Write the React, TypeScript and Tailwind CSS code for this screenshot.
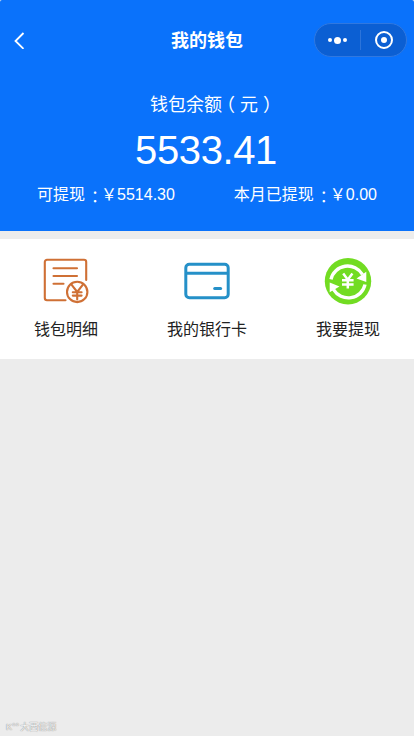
import type { ReactNode } from 'react';

interface MenuItem {
  label: string;
  icon: ReactNode;
}

// ============================================================
// ICONS
// ============================================================
function DetailIcon() {
  return (
    <svg width="48" height="48" viewBox="0 0 48 48" fill="none" stroke="#cf7035" strokeWidth="2.1" strokeLinecap="round">
      <path d="M23.500 43.300H5a2.200 2.200 0 0 1-2.200-2.200V5a2.200 2.200 0 0 1 2.200-2.200h37a2.200 2.200 0 0 1 2.200 2.200v18" />
      <path d="M11.500 11.300h23.500M11.500 19h23.500M11.500 26.700h10" />
      <circle cx="35.200" cy="34.900" r="10.200" />
      <path d="M29.300 27.300l5.900 7.700 5.900-7.700M30.800 35.300h8.800M30.800 38.600h8.800M35.200 35v7.500" />
    </svg>
  );
}

function CardIcon() {
  return (
    <svg width="48" height="48" viewBox="0 0 48 48" fill="none" stroke="#2590c8" strokeWidth="3">
      <rect x="2.800" y="7.300" width="42.400" height="33.500" rx="3.500" />
      <path d="M2.800 16.300h42.400" />
      <path d="M31.700 31.400h5.900" strokeLinecap="round" />
    </svg>
  );
}

function WithdrawIcon() {
  return (
    <svg width="48" height="48" viewBox="0 0 48 48" fill="none">
      <circle cx="24" cy="24.200" r="23.200" fill="#72dc22" />
      <path d="M7 22.300A17 16.500 0 0 1 38.500 17.500M41 27.500A17 16.500 0 0 1 9.500 32.500" stroke="#fff" strokeWidth="3.400" />
      <path d="M42.300 14.700v10.200L32.500 21.600zM5.700 35.300V25.600l9.800 3.800z" fill="#fff" />
      <path d="M19.200 16.500l4.600 6.200 4.600-6.200M18 23.200h11.600M18 27.400h11.600M23.800 22.500v9" stroke="#fff" strokeWidth="2.500" />
    </svg>
  );
}

const MENU: MenuItem[] = [
  { label: '钱包明细', icon: <DetailIcon /> },
  { label: '我的银行卡', icon: <CardIcon /> },
  { label: '我要提现', icon: <WithdrawIcon /> },
];

// ============================================================
// NAV BAR
// ============================================================
function NavBar() {
  return (
    <div className="grid h-20 grid-cols-[1fr_auto_1fr] items-center pr-[7px] pl-[13px]">
      <button aria-label="返回" className="w-4">
        <svg width="14" height="18" viewBox="0 0 14 18" fill="none" stroke="#fff" strokeWidth="1.8">
          <path d="M10.500 2L2.500 10l8 7.800" />
        </svg>
      </button>
      <h1 className="mr-[6px] pt-[2px] text-lg font-bold">我的钱包</h1>
      <div className="flex h-[34px] w-[93px] items-center justify-self-end rounded-full border border-[#3078e0] bg-[#0b5fd3]">
        <button aria-label="更多" className="flex flex-1 items-center justify-center gap-[2px]">
          <span className="size-[4px] rounded-full bg-white" />
          <span className="size-[7px] rounded-full bg-white" />
          <span className="size-[4px] rounded-full bg-white" />
        </button>
        <span className="h-5 w-px bg-[#2c74da]" />
        <button aria-label="关闭" className="flex flex-1 justify-center">
          <span className="flex size-[18px] items-center justify-center rounded-full border-[2.500px] border-white">
            <span className="size-[6px] rounded-full bg-white" />
          </span>
        </button>
      </div>
    </div>
  );
}

// ============================================================
// BALANCE
// ============================================================
// half-width colon, padded back so it sits centred in its cell
function Colon() {
  return <span className="mr-[2px] ml-[6px] inline-block translate-y-[2px] [font-feature-settings:'halt']">：</span>;
}

function Balance() {
  return (
    <div className="flex flex-col items-center">
      <p className="mt-[11px] ml-3 text-lg leading-7">
        钱包余额
        <span className="mr-[5px] ml-1 [font-feature-settings:'halt']">（</span>
        元
        <span className="mr-1 ml-[5px] [font-feature-settings:'halt']">）</span>
      </p>
      <p className="mt-[7px] mr-[2px] text-[40px] leading-[48px] tracking-[-0.4px]">5533.41</p>
      <div className="mt-[9px] flex w-full justify-between px-[37px] text-base leading-6">
        <span>可提现<Colon />￥5514.30</span>
        <span>本月已提现<Colon />￥0.00</span>
      </div>
    </div>
  );
}

export default function App() {
  return (
    <div className="flex h-[736px] w-[414px] flex-col bg-[#ececec] font-['Liberation_Sans','Noto_Sans_CJK_SC',sans-serif] text-[#222]">
      <header className="h-[231px] rounded-t-[2px] bg-[#0a72fb] text-white">
        <NavBar />
        <Balance />
      </header>
      <nav className="mt-2 grid h-[120px] grid-cols-[132px_150px_132px] bg-white">
        {MENU.map(item => (
          <button key={item.label} className="flex flex-col items-center pt-[18px]">
            {item.icon}
            <span className="mt-[13px] text-base leading-6">{item.label}</span>
          </button>
        ))}
      </nav>
      <footer className="mt-auto flex items-center gap-px pb-[3px] pl-[6px] text-[9px] leading-3 text-[#f4f4f4] [text-shadow:0_0_1px_#888,0_0_1px_#aaa]">
        <span>K°°</span>
        <span>大西信源</span>
      </footer>
    </div>
  );
}
